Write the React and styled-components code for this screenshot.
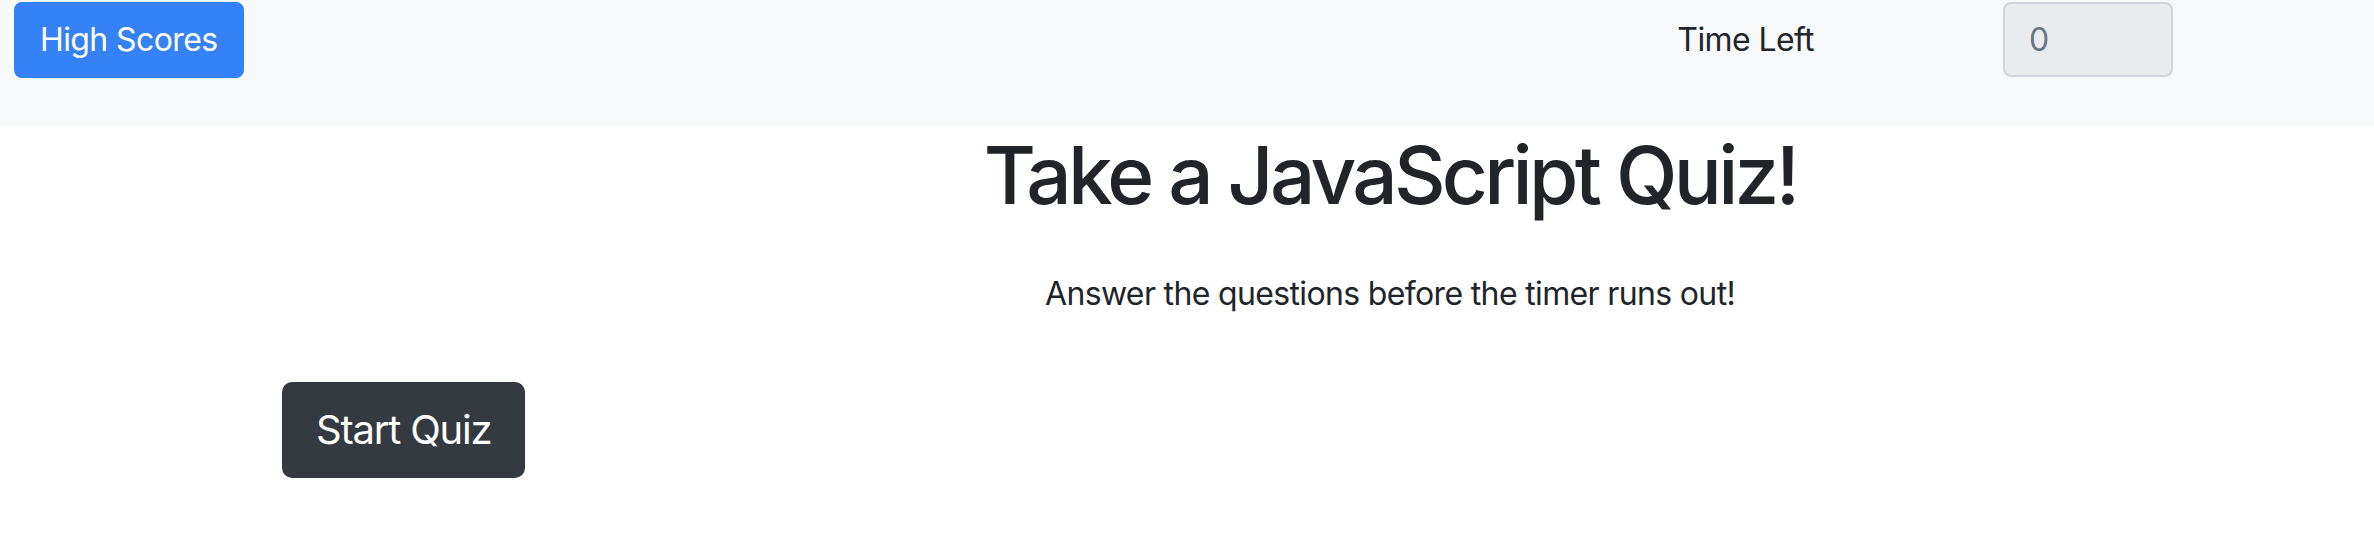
import React from "react";
import styled, { createGlobalStyle } from "styled-components";

const GlobalStyle = createGlobalStyle`
  html, body { margin: 0; padding: 0; background: #ffffff; }
  body {
    font-family: Inter, "Noto Sans", "Liberation Sans", sans-serif;
    color: #212529;
  }
  * { box-sizing: border-box; }
`;

const Page = styled.div`
  width: 2374px;
  min-height: 542px;
  display: flex;
  flex-direction: column;
`;

const Header = styled.header`
  height: 126px;
  background: #f8f9fa;
  display: flex;
  align-items: flex-start;
  justify-content: space-between;
  padding: 2px 201px 0 14px;
`;

const TimerGroup = styled.div`
  display: flex;
  align-items: center;
  gap: 189px;
`;

const TimeLabel = styled.span`
  font-size: 32px;
  line-height: 48px;
  letter-spacing: -0.6px;
  color: #212529;
`;

const TimeInput = styled.input`
  width: 170px;
  height: 75px;
  padding: 0 24px;
  font-family: inherit;
  font-size: 32px;
  color: #6c757d;
  background: #e9ecef;
  border: 2px solid #ced4da;
  border-radius: 8px;
  outline: none;
`;

const Button = styled.button`
  font-family: inherit;
  color: #ffffff;
  background: ${(p) => (p.$variant === "dark" ? "#343a40" : "#3581f6")};
  border: 2px solid ${(p) => (p.$variant === "dark" ? "#343a40" : "#3581f6")};
  border-radius: ${(p) => (p.$large ? "10px" : "8px")};
  font-size: ${(p) => (p.$large ? "40px" : "32px")};
  letter-spacing: ${(p) => (p.$large ? "-1.2px" : "-0.6px")};
  line-height: 1.5;
  padding: ${(p) => (p.$large ? "16px 32px" : "12px 24px")};
  cursor: pointer;
`;

const Hero = styled.section`
  padding-left: 406px;
  text-align: center;
`;

const Title = styled.h1`
  margin: 1px 0 0;
  font-size: 80px;
  line-height: 96px;
  font-weight: 500;
  letter-spacing: -3.7px;
  color: #212529;
`;

const Lead = styled.p`
  margin: 47px 0 0;
  font-size: 32px;
  line-height: 48px;
  letter-spacing: -0.65px;
  color: #212529;
`;

const ActionRow = styled.div`
  padding: 64px 0 0 282px;
`;

export default function App() {
  return (
    <Page>
      <GlobalStyle />
      <Header>
        <Button>High Scores</Button>
        <TimerGroup>
          <TimeLabel>Time Left</TimeLabel>
          <TimeInput value="0" disabled readOnly />
        </TimerGroup>
      </Header>
      <Hero>
        <Title>Take a JavaScript Quiz!</Title>
        <Lead>Answer the questions before the timer runs out!</Lead>
      </Hero>
      <ActionRow>
        <Button $variant="dark" $large>
          Start Quiz
        </Button>
      </ActionRow>
    </Page>
  );
}
